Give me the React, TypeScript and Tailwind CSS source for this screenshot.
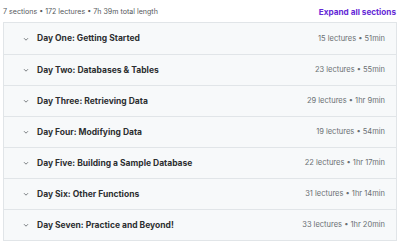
import React from "react";

const sections = [
  { title: "Day One: Getting Started", meta: "15 lectures • 51min" },
  { title: "Day Two: Databases & Tables", meta: "23 lectures • 55min" },
  { title: "Day Three: Retrieving Data", meta: "29 lectures • 1hr 9min" },
  { title: "Day Four: Modifying Data", meta: "19 lectures • 54min" },
  { title: "Day Five: Building a Sample Database", meta: "22 lectures • 1hr 17min" },
  { title: "Day Six: Other Functions", meta: "31 lectures • 1hr 14min" },
  { title: "Day Seven: Practice and Beyond!", meta: "33 lectures • 1hr 20min" },
];

const Chevron = () => (
  <svg width="8" height="8" viewBox="0 0 8 8" className="shrink-0">
    <path d="M2 3.2 L4 5.2 L6 3.2" fill="none" stroke="#6a6f73" strokeWidth="0.9" />
  </svg>
);

export default function App() {
  return (
    <div className="w-[400px] h-[244px] bg-white font-['Inter',sans-serif] text-[#2d2f31] px-[3px] pt-[4px]">
      <div className="flex items-center justify-between h-[16px] pr-[1px]">
        <span className="text-[7.1px] text-[#55595c]">
          7 sections • 172 lectures • 7h 39m total length
        </span>
        <span className="text-[8.2px] font-bold text-[#6429d6]">Expand all sections</span>
      </div>
      <div className="mt-[2px] border border-[#e1e5e8]">
        {sections.map((s, i) => (
          <div
            key={s.title}
            className={`flex items-center h-[31px] bg-[#f7f9fa] pl-[18px] pr-[11px] ${
              i > 0 ? "border-t border-[#e1e5e8]" : ""
            }`}
          >
            <Chevron />
            <span className="ml-[7px] text-[8.5px] font-bold">{s.title}</span>
            <span className="ml-auto text-[7.5px] text-[#6a6f73]">{s.meta}</span>
          </div>
        ))}
      </div>
    </div>
  );
}
